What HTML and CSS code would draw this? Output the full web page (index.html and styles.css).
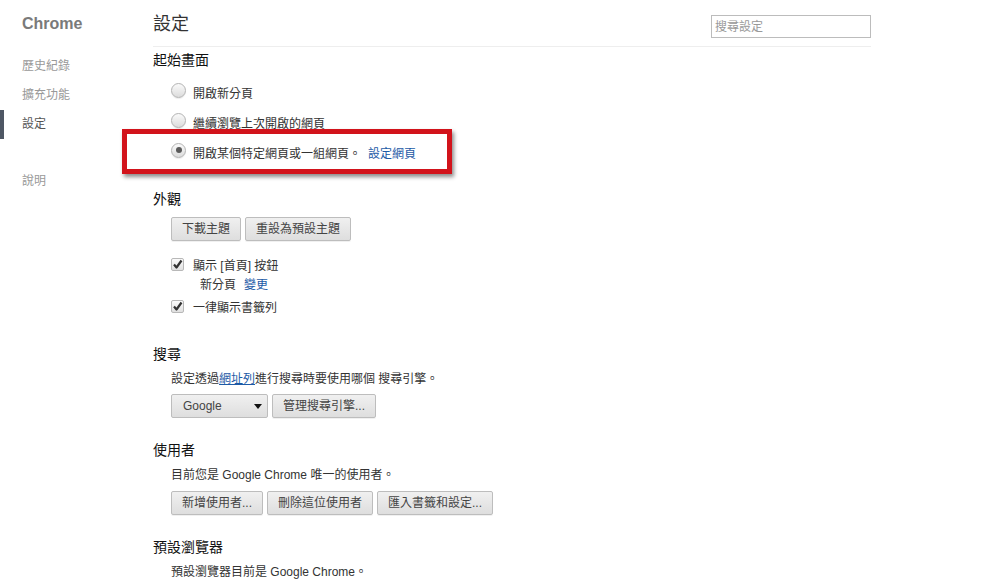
FILE: index.html
```html
<!DOCTYPE html>
<html lang="zh-Hant">
<head>
<meta charset="utf-8">
<title>設定</title>
<link rel="stylesheet" href="styles.css">
</head>
<body>
<div class="page">
  <nav class="sidebar">
    <h1 class="brand">Chrome</h1>
    <ul class="nav">
      <li class="nav-item">歷史紀錄</li>
      <li class="nav-item">擴充功能</li>
      <li class="nav-item selected">設定</li>
      <li class="nav-item help">說明</li>
    </ul>
  </nav>
  <main class="main">
    <header class="header">
      <h2 class="title">設定</h2>
      <input class="search" type="text" placeholder="搜尋設定">
    </header>

    <section class="section first">
      <h3 class="sec-title">起始畫面</h3>
      <div class="radio-row"><span class="radio"></span><span class="label">開啟新分頁</span></div>
      <div class="radio-row"><span class="radio"></span><span class="label">繼續瀏覽上次開啟的網頁</span></div>
      <div class="radio-row"><span class="radio checked"></span><span class="label">開啟某個特定網頁或一組網頁。</span><a class="link set-pages">設定網頁</a></div>
      <div class="highlight"></div>
    </section>

    <section class="section">
      <h3 class="sec-title">外觀</h3>
      <div class="btn-row appearance-btns">
        <button class="btn">下載主題</button>
        <button class="btn">重設為預設主題</button>
      </div>
      <div class="check-row first-check"><span class="checkbox"><svg viewBox="0 0 13 13" width="13" height="13"><path d="M3 6.5 L5.5 9.5 L10.5 2.5" fill="none" stroke="#333" stroke-width="2.2" stroke-linejoin="round"/></svg></span><span class="label">顯示 [首頁] 按鈕</span></div>
      <div class="sub-row"><span>新分頁</span><a class="link change">變更</a></div>
      <div class="check-row"><span class="checkbox"><svg viewBox="0 0 13 13" width="13" height="13"><path d="M3 6.5 L5.5 9.5 L10.5 2.5" fill="none" stroke="#333" stroke-width="2.2" stroke-linejoin="round"/></svg></span><span class="label">一律顯示書籤列</span></div>
    </section>

    <section class="section search-sec">
      <h3 class="sec-title">搜尋</h3>
      <p class="desc">設定透過<a class="link underline">網址列</a>進行搜尋時要使用哪個 搜尋引擎。</p>
      <div class="btn-row select-row">
        <div class="select"><span>Google</span><span class="arrow"></span></div>
        <button class="btn">管理搜尋引擎...</button>
      </div>
    </section>

    <section class="section">
      <h3 class="sec-title">使用者</h3>
      <p class="desc">目前您是 Google Chrome 唯一的使用者。</p>
      <div class="btn-row user-btns">
        <button class="btn">新增使用者...</button>
        <button class="btn">刪除這位使用者</button>
        <button class="btn">匯入書籤和設定...</button>
      </div>
    </section>

    <section class="section">
      <h3 class="sec-title">預設瀏覽器</h3>
      <p class="desc">預設瀏覽器目前是 Google Chrome。</p>
    </section>
  </main>
</div>
</body>
</html>
```

FILE: styles.css
```css
* { box-sizing: border-box; }
html, body { margin: 0; padding: 0; background: #fff; }
body {
  font-family: "Liberation Sans", "Noto Sans CJK TC", sans-serif;
  font-size: 12px;
  color: #333;
  width: 989px;
  height: 586px;
  overflow: hidden;
}
.page { display: flex; }

.sidebar { width: 153px; flex: none; padding-top: 13px; }
.brand {
  margin: 0;
  padding-left: 22px;
  font-size: 16px;
  line-height: 22px;
  font-weight: bold;
  color: #7a7a7a;
}
.nav { list-style: none; margin: 17px 0 0; padding: 0; }
.nav-item {
  height: 29px;
  line-height: 29px;
  padding-left: 22px;
  color: #999;
  font-size: 12px;
}
.nav-item.selected {
  border-left: 4px solid #4e5764;
  padding-left: 18px;
  color: #555;
}
.nav-item.help { margin-top: 28px; }

.main { width: 718px; flex: none; }
.header {
  height: 47px;
  border-bottom: 1px solid #eeeeee;
  display: flex;
  justify-content: space-between;
  align-items: flex-start;
  padding-top: 13px;
}
.title {
  margin: 0;
  font-size: 18px;
  line-height: 22px;
  font-weight: normal;
  color: #333;
}
.search {
  margin-top: 2px;
  width: 160px;
  height: 23px;
  border: 1px solid #bcbcbc;
  padding: 0 3px;
  font-family: "Liberation Sans", "Noto Sans CJK TC", sans-serif;
  font-size: 12px;
  color: #333;
  outline: none;
}
.search::placeholder { color: #999; }

.section { position: relative; margin-top: 22px; }
.section.first { margin-top: 3px; }
.section.search-sec { margin-top: 27px; }
.sec-title {
  margin: 0;
  font-size: 14px;
  line-height: 20px;
  font-weight: normal;
  color: #111;
}

.radio-row {
  height: 30px;
  display: flex;
  align-items: center;
  padding-left: 18px;
}
.section.first .sec-title { margin-bottom: 7px; }
.radio {
  width: 15px;
  height: 15px;
  border-radius: 50%;
  border: 1px solid #b3b3b3;
  background: linear-gradient(#fafafa, #dcdcdc);
  box-shadow: 0 1px 1px rgba(0,0,0,0.08);
  margin-right: 7px;
  position: relative;
  top: -2px;
  flex: none;
}
.radio.checked::after {
  content: "";
  position: absolute;
  left: 3.5px;
  top: 3.5px;
  width: 6px;
  height: 6px;
  border-radius: 50%;
  background: #5a5a5a;
}
.label { color: #333; }
.link { color: #1d5aa6; cursor: pointer; }
.link.underline { text-decoration: underline; }
.set-pages { margin-left: 7px; }

.highlight {
  position: absolute;
  left: -31px;
  top: 79px;
  width: 330px;
  height: 45px;
  border: 5px solid #d2131b;
  box-shadow: 2px 3px 4px rgba(0,0,0,0.45);
  pointer-events: none;
}

.btn-row { display: flex; gap: 4px; padding-left: 18px; }
.appearance-btns { margin-top: 8px; }
.btn {
  height: 24px;
  padding: 0 10px;
  margin: 0;
  border: 1px solid #bdbdbd;
  border-radius: 2px;
  background: linear-gradient(#f0f0f0, #dedede);
  box-shadow: 0 1px 0 rgba(0,0,0,0.06);
  font-family: "Liberation Sans", "Noto Sans CJK TC", sans-serif;
  font-size: 12px;
  color: #444;
  line-height: 22px;
  white-space: nowrap;
}

.check-row {
  height: 21px;
  display: flex;
  align-items: center;
  padding-left: 18px;
}
.check-row.first-check { margin-top: 13px; }
.checkbox {
  width: 13px;
  height: 13px;
  border: 1px solid #b8b8b8;
  border-radius: 2px;
  background: linear-gradient(#fbfbfb, #e0e0e0);
  margin-right: 9px;
  display: flex;
  align-items: center;
  justify-content: center;
  overflow: hidden;
  flex: none;
}
.checkbox svg { display: block; flex: none; }
.sub-row {
  height: 21px;
  line-height: 21px;
  padding-left: 47px;
}
.change { margin-left: 8px; }

.desc {
  margin: 5px 0 0;
  padding-left: 18px;
  line-height: 20px;
  color: #333;
}
.select-row { margin-top: 5px; }
.select {
  width: 97px;
  height: 24px;
  border: 1px solid #bdbdbd;
  border-radius: 2px;
  background: linear-gradient(#f0f0f0, #dedede);
  display: flex;
  align-items: center;
  justify-content: space-between;
  padding: 0 5px 0 11px;
  color: #444;
  font-size: 12px;
}
.arrow {
  width: 0;
  height: 0;
  border-left: 4.5px solid transparent;
  border-right: 4.5px solid transparent;
  border-top: 5px solid #111;
}
.user-btns { margin-top: 6px; }
```
